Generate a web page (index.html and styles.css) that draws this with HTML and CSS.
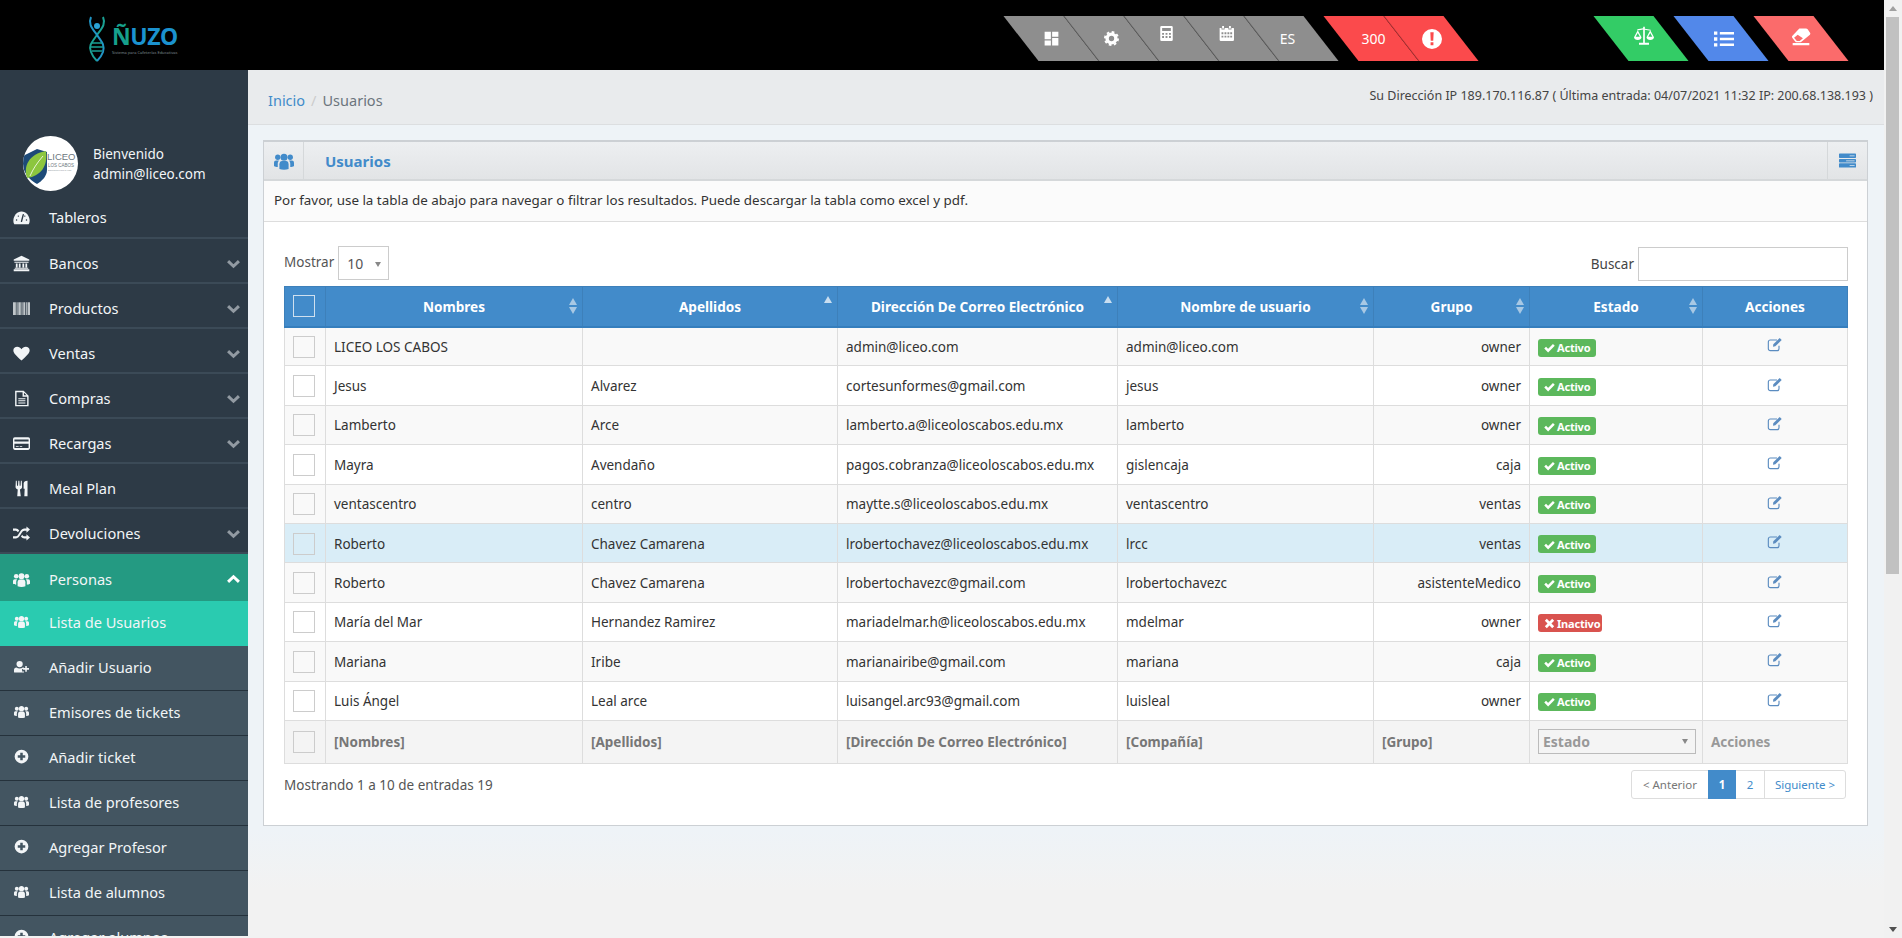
FILE: index.html
```html
<!DOCTYPE html>
<html lang="es">
<head>
    <meta charset="UTF-8">
    <title>Usuarios</title>
    <link rel="stylesheet" href="styles.css">
</head>
<body>
    <!-- icon sprite -->
    <svg class="sprite" xmlns="http://www.w3.org/2000/svg">
        <symbol id="i-users" viewBox="0 0 24 24"><circle cx="12" cy="7.5" r="4.200"/><circle cx="4.500" cy="7.500" r="3.200"/><circle cx="19.500" cy="7.500" r="3.200"/><path d="M6.500 21.500v-5.500c0-2.600 1.500-4 3-4h5c1.500 0 3 1.400 3 4v5.500c-3 1.300-8 1.300-11 0z"/><path d="M0 18v-3.500c0-2 1-3 2.500-3H6c-.9 1-1.500 2.200-1.500 4v3.800C3 19.300 1 18.700 0 18zM24 18v-3.500c0-2-1-3-2.500-3H18c.9 1 1.500 2.200 1.500 4v3.800c1.500 0 3.500-.6 4.500-1.300z"/></symbol>
        <symbol id="i-gauge" viewBox="0 0 24 24"><path d="M.5 16.500C.5 9.600 5.600 3.500 12 3.500s11.500 6.100 11.500 13c0 1.900-.5 3.500-1.300 5H1.800C1 20 .5 18.400.5 16.500z"/><path class="cut" d="M12 17.500L14.500 8M5 15.500h.1M7.500 10h.1M16.600 10h.1M19 15.500h.1"/></symbol>
        <symbol id="i-bank" viewBox="0 0 24 24"><path d="M12 1L1 6.500V8h22V6.500zM2 9.500h20v1.500H2zM1 20h22v3H1zM2.500 18h19v1.500h-19zM4 12h2.500v5.500H4zM8.200 12h2.500v5.500H8.200zM13.300 12h2.500v5.500h-2.500zM17.500 12H20v5.500h-2.500z"/></symbol>
        <symbol id="i-barcode" viewBox="0 0 24 24"><path d="M0 3h4v18H0zM5 3h1.500v18H5zM7.500 3H11v18H7.500zM12 3h1.500v18H12zM14.500 3H17v18h-2.500zM18 3h1.500v18H18zM20.500 3H24v18h-3.500z" opacity=".75"/></symbol>
        <symbol id="i-heart" viewBox="0 0 24 24"><path d="M12 22C5 15.500.5 12 .5 7.500.5 4.400 3 2.500 6 2.500c2.500 0 4.700 1.400 6 3.500 1.300-2.100 3.500-3.500 6-3.500 3 0 5.500 1.900 5.500 5C23.500 12 19 15.500 12 22z"/></symbol>
        <symbol id="i-file" viewBox="0 0 24 24"><path fill-rule="evenodd" d="M3 1h12l7 7v15H3zM5 3v18h15V9.500h-6.500V3zM15.500 3.800v3.700h3.700zM7.500 11.500h10v1.500h-10zM7.500 14.500h10V16h-10zM7.500 17.500h10V19h-10z"/></symbol>
        <symbol id="i-card" viewBox="0 0 24 24"><path fill-rule="evenodd" d="M2.500 3h19A2.500 2.500 0 0 1 24 5.500v13a2.500 2.500 0 0 1-2.500 2.500h-19A2.500 2.500 0 0 1 0 18.500v-13A2.500 2.500 0 0 1 2.500 3zM2 6.500V9h20V6.500zM2 12.500v6h20v-6zM4 15.800h4V17H4zM9.500 15.800h3.500V17H9.500z"/></symbol>
        <symbol id="i-cutlery" viewBox="0 0 24 24"><path d="M4 1h1.300l.4 7h1.400l.4-7H9l.4 7h1.300l.4-7h1.300l.4 9c0 1.500-1.200 2.800-3 3.300L11 23H6l.7-9.700C4.800 12.800 3.600 11.500 3.600 10zM15 12.500V5c0-2.500 2-4 5.500-4v22H16l.5-10.500z"/></symbol>
        <symbol id="i-random" viewBox="0 0 24 24"><path d="M19 2l5 4.500-5 4.500V8h-3c-1.500 0-2.500 1-3.500 2.500L11 13l-2 3c-1.500 2-3 3-5 3H0v-3h4c1 0 2-.6 3-2l2-3 1.600-2.500C12 6.500 13.800 5 16 5h3zM0 5h4c2 0 3.500 1 4.800 2.800L7 10.300C6 8.800 5 8 4 8H0zM13 13.800c1 1.500 2 2.200 3 2.200h3v-3l5 4.500-5 4.500v-3h-3c-2 0-3.500-1-4.800-2.800z"/></symbol>
        <symbol id="i-down" viewBox="0 0 24 24"><path d="M2 7.500L12 17 22 7.500" fill="none" stroke="currentColor" stroke-width="5.500"/></symbol>
        <symbol id="i-up" viewBox="0 0 24 24"><path d="M2 16.500L12 7l10 9.500" fill="none" stroke="currentColor" stroke-width="5.500"/></symbol>
        <symbol id="i-userplus" viewBox="0 0 24 24"><circle cx="9" cy="8" r="5"/><path d="M0 21v-3c0-3 1.500-4.500 4-4.500 1.300 1 3 1.600 5 1.600s3.700-.6 5-1.600c.8 0 1.400.2 2 .5v2h-3v4h3v1.500H2c-1.200 0-2-.3-2-.5z"/><path d="M18 11h2.500v3.500H24V17h-3.500v3.500H18V17h-3.500v-2.500H18z"/></symbol>
        <symbol id="i-plus" viewBox="0 0 24 24"><path fill-rule="evenodd" d="M12 1a11 11 0 1 1 0 22 11 11 0 0 1 0-22zM10 6v4H6v4h4v4h4v-4h4v-4h-4V6z"/></symbol>
        <symbol id="i-quilt" viewBox="0 0 24 24"><path d="M1 13h10V1H1zM1 23h10v-8H1zM13 23h10V11H13zM13 1v8h10V1z"/></symbol>
        <symbol id="i-cog" viewBox="0 0 24 24"><circle cx="12" cy="12" r="7" fill="none" stroke="currentColor" stroke-width="5.500"/><circle cx="12" cy="12" r="10.500" fill="none" stroke="currentColor" stroke-width="3" stroke-dasharray="4.300 3.950"/></symbol>
        <symbol id="i-calc" viewBox="0 0 24 24"><path fill-rule="evenodd" d="M4 0h16a2 2 0 0 1 2 2v20a2 2 0 0 1-2 2H4a2 2 0 0 1-2-2V2a2 2 0 0 1 2-2zM5 3v5h14V3zM5 11v3h3v-3zM10.500 11v3h3v-3zM16 11v3h3v-3zM5 16v3h3v-3zM10.500 16v3h3v-3zM16 16v3h3v-3z"/></symbol>
        <symbol id="i-cal" viewBox="0 0 24 24"><path fill-rule="evenodd" d="M5 0h3v4H5zM16 0h3v4h-3zM1 3h3v2.500h5V3h6v2.500h5V3h3a1 1 0 0 1 1 1v18a2 2 0 0 1-2 2H3a2 2 0 0 1-2-2zM4 10v3h3v-3zM8.800 10v3h3v-3zM13.500 10v3h3v-3zM18 10v3h3v-3zM4 15.500v3h3v-3zM8.800 15.500v3h3v-3zM13.500 15.500v3h3v-3zM18 15.500v3h3v-3z"/></symbol>
        <symbol id="i-alert" viewBox="0 0 24 24"><path fill-rule="evenodd" d="M12 0a12 12 0 1 1 0 24 12 12 0 0 1 0-24zM10 4l.5 10h3L14 4zM10.300 16v3.500h3.400V16z"/></symbol>
        <symbol id="i-scale" viewBox="0 0 24 24"><path d="M11 1h2v2.200l7 1.300v1.300l-7-1.200V20h5v2.500H6V20h5V4.100L4 5.300V4l7-1.300z"/><path fill-rule="evenodd" d="M4.500 5L9 13.500c0 2-2 3.200-4.500 3.200S0 15.500 0 13.500zM4.500 8.500L2 13h5zM19.500 5L24 13.500c0 2-2 3.200-4.500 3.200s-4.500-1.200-4.500-3.200zM19.500 8.500L17 13h5z"/></symbol>
        <symbol id="i-list" viewBox="0 0 24 24"><path d="M0 3h4v4H0zM0 10h4v4H0zM0 17h4v4H0zM7 3.500h17v3H7zM7 10.500h17v3H7zM7 17.500h17v3H7z"/></symbol>
        <symbol id="i-eraser" viewBox="0 0 24 24"><path fill-rule="evenodd" d="M10 3h8c.8 0 1.500.3 2 1l3 4.500c.4.700.3 1.400-.3 2L12.500 18.800c-.6.500-1.200.7-2 .7H7c-.8 0-1.500-.3-2-1l-3.500-4.500c-.5-.7-.5-1.400 0-2zM8 10.500l-4.300 3.700 3.300 3.800h3.500l3.800-3.300zM2 20.500h20V23H2z"/></symbol>
        <symbol id="i-tasks" viewBox="0 0 24 24"><path fill-rule="evenodd" d="M1 2h22a1 1 0 0 1 1 1v4.500a1 1 0 0 1-1 1H1a1 1 0 0 1-1-1V3a1 1 0 0 1 1-1zM1 9.800h22a1 1 0 0 1 1 1v3a1 1 0 0 1-1 1H1a1 1 0 0 1-1-1v-3a1 1 0 0 1 1-1zM1 16h22a1 1 0 0 1 1 1v4a1 1 0 0 1-1 1H1a1 1 0 0 1-1-1v-4a1 1 0 0 1 1-1zM15 5v1h7V5zM10 12v1h12v-1zM15 18.800v1h7v-1z"/></symbol>
        <symbol id="i-edit" viewBox="0 0 24 24"><path d="M18 14.500V19a3 3 0 0 1-3 3H5a3 3 0 0 1-3-3V9a3 3 0 0 1 3-3h10" fill="none" stroke="currentColor" stroke-width="1.700"/><path d="M9.500 12.500L19 3l3 3-9.500 9.500L9 16z"/></symbol>
        <symbol id="i-check" viewBox="0 0 24 24"><path d="M2.500 12.500L9 19 21.500 6.500" fill="none" stroke="currentColor" stroke-width="5.500"/></symbol>
        <symbol id="i-times" viewBox="0 0 24 24"><path d="M4 4l16 16M20 4L4 20" fill="none" stroke="currentColor" stroke-width="6"/></symbol>
    </svg>

    <div class="page">
        <div class="app">
            <header class="topbar">
                <a class="logo">
                    <svg class="logo-dna" viewBox="0 0 18 46">
                        <path d="M15 1c3 7-1 11-6 18-5 7-9 11-6 17 1 3 3 6 6 9" fill="none" stroke="#1aa093" stroke-width="2"/>
                        <path d="M3 1C0 8 4 12 9 19c5 7 8 10 6 17-1 3-3 6-6 9" fill="none" stroke="#2094c4" stroke-width="2"/>
                        <circle cx="9" cy="10" r="3" fill="#2aa2d6"/>
                        <path d="M4 27h10M3 31h12M4 35h10" stroke="#1aa093" stroke-width="1.500"/>
                    </svg>
                    <span class="logo-text">
                        <span class="logo-name"><span class="logo-n">Ñ</span>UZO</span>
                        <span class="logo-sub">Sistema para Cafeterías Educativas</span>
                    </span>
                </a>
                <div class="tabs">
                    <ul class="tab-group grey">
                        <li><span><svg class="ico"><use href="#i-quilt"/></svg></span></li>
                        <li><span><svg class="ico"><use href="#i-cog"/></svg></span></li>
                        <li><span class="raised"><svg class="ico"><use href="#i-calc"/></svg></span></li>
                        <li><span class="raised"><svg class="ico"><use href="#i-cal"/></svg></span></li>
                        <li><span class="nudge-left">ES</span></li>
                    </ul>
                    <ul class="tab-group red">
                        <li><span class="nudge-right">300</span></li>
                        <li><span><svg class="ico big"><use href="#i-alert"/></svg></span></li>
                    </ul>
                    <ul class="tab-group green tools">
                        <li><span class="raised-sm nudge-right"><svg class="ico big"><use href="#i-scale"/></svg></span></li>
                    </ul>
                    <ul class="tab-group blue">
                        <li><span class="nudge-right"><svg class="ico big"><use href="#i-list"/></svg></span></li>
                    </ul>
                    <ul class="tab-group salmon">
                        <li><span class="raised-sm"><svg class="ico big"><use href="#i-eraser"/></svg></span></li>
                    </ul>
                </div>
            </header>

            <div class="layout">
                <aside class="sidebar">
                    <div class="profile">
                        <div class="avatar">
                            <svg viewBox="0 0 55 55">
                                <path d="M0 20l14-7 10 3v18c0 6-5 11-10 14C6 44 0 36 0 28z" fill="#1d4a78"/>
                                <path d="M4 42C0 30 6 18 23 15c2 15-5 25-19 27z" fill="#8cc63f"/>
                                <path d="M7 40c3-7 7-13 13-20" fill="none" stroke="#fff" stroke-width=".8"/>
                                <text x="24" y="24" class="avatar-big">LICEO</text>
                                <text x="25" y="31" class="avatar-small">LOS CABOS</text>
                                <text x="25" y="35" class="avatar-tiny">Educación para la vida</text>
                            </svg>
                        </div>
                        <div class="profile-text">
                            <div>Bienvenido</div>
                            <div>admin@liceo.com</div>
                        </div>
                    </div>
                    <nav>
                        <a class="nav-item"><svg class="nav-ico"><use href="#i-gauge"/></svg>Tableros</a>
                        <a class="nav-item"><svg class="nav-ico"><use href="#i-bank"/></svg>Bancos<svg class="caret"><use href="#i-down"/></svg></a>
                        <a class="nav-item"><svg class="nav-ico"><use href="#i-barcode"/></svg>Productos<svg class="caret"><use href="#i-down"/></svg></a>
                        <a class="nav-item"><svg class="nav-ico"><use href="#i-heart"/></svg>Ventas<svg class="caret"><use href="#i-down"/></svg></a>
                        <a class="nav-item"><svg class="nav-ico"><use href="#i-file"/></svg>Compras<svg class="caret"><use href="#i-down"/></svg></a>
                        <a class="nav-item"><svg class="nav-ico"><use href="#i-card"/></svg>Recargas<svg class="caret"><use href="#i-down"/></svg></a>
                        <a class="nav-item"><svg class="nav-ico"><use href="#i-cutlery"/></svg>Meal Plan</a>
                        <a class="nav-item"><svg class="nav-ico"><use href="#i-random"/></svg>Devoluciones<svg class="caret"><use href="#i-down"/></svg></a>
                        <a class="nav-item open"><svg class="nav-ico"><use href="#i-users"/></svg>Personas<svg class="caret"><use href="#i-up"/></svg></a>
                        <a class="sub-item active"><svg class="nav-ico"><use href="#i-users"/></svg>Lista de Usuarios</a>
                        <a class="sub-item"><svg class="nav-ico"><use href="#i-userplus"/></svg>Añadir Usuario</a>
                        <a class="sub-item"><svg class="nav-ico"><use href="#i-users"/></svg>Emisores de tickets</a>
                        <a class="sub-item"><svg class="nav-ico"><use href="#i-plus"/></svg>Añadir ticket</a>
                        <a class="sub-item"><svg class="nav-ico"><use href="#i-users"/></svg>Lista de profesores</a>
                        <a class="sub-item"><svg class="nav-ico"><use href="#i-plus"/></svg>Agregar Profesor</a>
                        <a class="sub-item"><svg class="nav-ico"><use href="#i-users"/></svg>Lista de alumnos</a>
                        <a class="sub-item"><svg class="nav-ico"><use href="#i-plus"/></svg>Agregar alumnos</a>
                    </nav>
                </aside>

                <main class="content">
                    <div class="breadcrumb">
                        <div class="crumbs"><a>Inicio</a><span class="slash">/</span><span>Usuarios</span></div>
                        <div class="ip-info">Su Dirección IP 189.170.116.87 ( Última entrada: 04/07/2021 11:32 IP: 200.68.138.193 )</div>
                    </div>

                    <section class="box">
                        <div class="box-header">
                            <div class="box-icon"><svg class="ico big"><use href="#i-users"/></svg></div>
                            <h2>Usuarios</h2>
                            <div class="box-tool"><svg class="ico tool"><use href="#i-tasks"/></svg></div>
                        </div>
                        <p class="box-intro">Por favor, use la tabla de abajo para navegar o filtrar los resultados. Puede descargar la tabla como excel y pdf.</p>
                        <div class="box-body">
                            <div class="table-tools">
                                <label class="length">Mostrar <span class="fake-select">10<i class="tri"></i></span></label>
                                <label class="search">Buscar <input type="text"></label>
                            </div>
                            <table class="users">
                                <colgroup>
                                    <col class="c-check"><col class="c-name"><col class="c-last"><col class="c-mail">
                                    <col class="c-user"><col class="c-group"><col class="c-state"><col class="c-act">
                                </colgroup>
                                <thead>
                                    <tr>
                                        <th><span class="check head"></span></th>
                                        <th class="sort">Nombres</th>
                                        <th class="sort asc">Apellidos</th>
                                        <th class="sort asc">Dirección De Correo Electrónico</th>
                                        <th class="sort">Nombre de usuario</th>
                                        <th class="sort">Grupo</th>
                                        <th class="sort">Estado</th>
                                        <th>Acciones</th>
                                    </tr>
                                </thead>
                                <tbody>
                                    <tr><td><span class="check"></span></td><td>LICEO LOS CABOS</td><td></td><td>admin@liceo.com</td><td>admin@liceo.com</td><td class="right">owner</td><td><span class="badge on"><svg><use href="#i-check"/></svg>Activo</span></td><td class="center"><svg class="edit"><use href="#i-edit"/></svg></td></tr>
                                    <tr><td><span class="check"></span></td><td>Jesus</td><td>Alvarez</td><td>cortesunformes@gmail.com</td><td>jesus</td><td class="right">owner</td><td><span class="badge on"><svg><use href="#i-check"/></svg>Activo</span></td><td class="center"><svg class="edit"><use href="#i-edit"/></svg></td></tr>
                                    <tr><td><span class="check"></span></td><td>Lamberto</td><td>Arce</td><td>lamberto.a@liceoloscabos.edu.mx</td><td>lamberto</td><td class="right">owner</td><td><span class="badge on"><svg><use href="#i-check"/></svg>Activo</span></td><td class="center"><svg class="edit"><use href="#i-edit"/></svg></td></tr>
                                    <tr><td><span class="check"></span></td><td>Mayra</td><td>Avendaño</td><td>pagos.cobranza@liceoloscabos.edu.mx</td><td>gislencaja</td><td class="right">caja</td><td><span class="badge on"><svg><use href="#i-check"/></svg>Activo</span></td><td class="center"><svg class="edit"><use href="#i-edit"/></svg></td></tr>
                                    <tr><td><span class="check"></span></td><td>ventascentro</td><td>centro</td><td>maytte.s@liceoloscabos.edu.mx</td><td>ventascentro</td><td class="right">ventas</td><td><span class="badge on"><svg><use href="#i-check"/></svg>Activo</span></td><td class="center"><svg class="edit"><use href="#i-edit"/></svg></td></tr>
                                    <tr class="hover"><td><span class="check"></span></td><td>Roberto</td><td>Chavez Camarena</td><td>lrobertochavez@liceoloscabos.edu.mx</td><td>lrcc</td><td class="right">ventas</td><td><span class="badge on"><svg><use href="#i-check"/></svg>Activo</span></td><td class="center"><svg class="edit"><use href="#i-edit"/></svg></td></tr>
                                    <tr><td><span class="check"></span></td><td>Roberto</td><td>Chavez Camarena</td><td>lrobertochavezc@gmail.com</td><td>lrobertochavezc</td><td class="right">asistenteMedico</td><td><span class="badge on"><svg><use href="#i-check"/></svg>Activo</span></td><td class="center"><svg class="edit"><use href="#i-edit"/></svg></td></tr>
                                    <tr><td><span class="check"></span></td><td>María del Mar</td><td>Hernandez Ramirez</td><td>mariadelmar.h@liceoloscabos.edu.mx</td><td>mdelmar</td><td class="right">owner</td><td><span class="badge off"><svg><use href="#i-times"/></svg>Inactivo</span></td><td class="center"><svg class="edit"><use href="#i-edit"/></svg></td></tr>
                                    <tr><td><span class="check"></span></td><td>Mariana</td><td>Iribe</td><td>marianairibe@gmail.com</td><td>mariana</td><td class="right">caja</td><td><span class="badge on"><svg><use href="#i-check"/></svg>Activo</span></td><td class="center"><svg class="edit"><use href="#i-edit"/></svg></td></tr>
                                    <tr><td><span class="check"></span></td><td>Luis Ángel</td><td>Leal arce</td><td>luisangel.arc93@gmail.com</td><td>luisleal</td><td class="right">owner</td><td><span class="badge on"><svg><use href="#i-check"/></svg>Activo</span></td><td class="center"><svg class="edit"><use href="#i-edit"/></svg></td></tr>
                                </tbody>
                                <tfoot>
                                    <tr>
                                        <td><span class="check"></span></td>
                                        <td>[Nombres]</td>
                                        <td>[Apellidos]</td>
                                        <td>[Dirección De Correo Electrónico]</td>
                                        <td>[Compañía]</td>
                                        <td>[Grupo]</td>
                                        <td class="foot-select"><span class="fake-select">Estado<i class="tri"></i></span></td>
                                        <td class="foot-muted">Acciones</td>
                                    </tr>
                                </tfoot>
                            </table>
                            <div class="table-bottom">
                                <div class="info">Mostrando 1 a 10 de entradas 19</div>
                                <ul class="pager">
                                    <li class="disabled">&lt; Anterior</li>
                                    <li class="current">1</li>
                                    <li class="num">2</li>
                                    <li class="next">Siguiente &gt;</li>
                                </ul>
                            </div>
                        </div>
                    </section>
                </main>
            </div>
        </div>

        <div class="scrollbar">
            <div class="scroll-btn"><i class="arrow-up"></i></div>
            <div class="scroll-thumb"></div>
            <div class="scroll-rest"></div>
            <div class="scroll-btn"><i class="arrow-down"></i></div>
        </div>
    </div>
</body>
</html>
```

FILE: styles.css
```css
/* Base */
* {
    box-sizing: border-box;
}

html, body {
    margin: 0;
    height: 938px;
    overflow: hidden;
}

body {
    font-family: "Noto Sans", "Liberation Sans", sans-serif;
    font-size: 13px;
    color: #333;
    background-color: #f2f2f2;
}

.sprite {
    display: none;
}

svg {
    fill: currentColor;
}

.ico {
    display: block;
    width: 15px;
    height: 15px;
}

.ico.big {
    width: 20px;
    height: 20px;
}

.ico.tool {
    width: 17px;
    height: 17px;
}

.page {
    display: flex;
    height: 938px;
}

.app {
    display: flex;
    flex-direction: column;
    width: 1884px;
    height: 936px;
}

/* Top bar */
.topbar {
    display: flex;
    align-items: center;
    flex: none;
    height: 70px;
    padding-right: 53.5px;
    background-color: #000;
}

.logo {
    display: flex;
    align-items: center;
    gap: 6px;
    width: 248px;
    margin-top: 8px;
    padding-left: 88px;
}

.logo-dna {
    width: 18px;
    height: 46px;
}

.logo-text {
    display: flex;
    flex-direction: column;
}

.logo-name {
    font-weight: 700;
    font-size: 23px;
    line-height: 26px;
    letter-spacing: -.3px;
    color: #1b92cf;
}

.logo-n {
    color: #16a08c;
}

.logo-sub {
    margin-top: 1px;
    font-size: 4px;
    line-height: 6px;
    white-space: nowrap;
    color: #7d8a8c;
}

.tabs {
    display: flex;
    gap: 20px;
    margin-top: 7px;
    margin-left: auto;
}

.tab-group {
    display: flex;
    margin: 0;
    padding: 0;
    list-style: none;
    color: #fff;
}

.tab-group.tools {
    margin-left: 130px;
}

.tab-group li {
    width: 60px;
    height: 45px;
    transform: skewX(37.9deg);
}

.tab-group li + li {
    border-left: 1px solid rgba(0, 0, 0, 0.28);
}

.tab-group li > span {
    display: flex;
    align-items: center;
    justify-content: center;
    height: 100%;
    font-size: 14px;
    transform: skewX(-37.9deg);
}

.tab-group li > .raised {
    padding-bottom: 10px;
    padding-right: 10px;
}

.tab-group li > .raised-sm {
    padding-bottom: 6px;
}

.tab-group li > .nudge-left {
    padding-right: 8px;
}

.tab-group li > .nudge-right {
    padding-left: 5px;
}

.grey li { background-color: #8e8e8e; }
.red li { background-color: #fb4a4c; }
.green li { background-color: #33cc66; }
.blue li { background-color: #5288ea; }
.salmon li { background-color: #fb6b6b; }

/* Sidebar */
.layout {
    display: flex;
    flex: 1;
    min-height: 0;
}

.sidebar {
    flex: none;
    width: 248px;
    overflow: hidden;
    background-color: #2d3a46;
    color: #f2f5f7;
}

.profile {
    display: flex;
    align-items: center;
    gap: 15px;
    height: 124px;
    padding: 66px 0 3px 23px;
    font-size: 13.500px;
    line-height: 20px;
}

.avatar {
    flex: none;
    width: 55px;
    height: 55px;
    overflow: hidden;
    border-radius: 50%;
    background-color: #fff;
}

.avatar svg {
    display: block;
    width: 55px;
    height: 55px;
}

.avatar-big {
    font-family: "Liberation Sans", sans-serif;
    font-size: 9.500px;
    fill: #6d7780;
}

.avatar-small {
    font-family: "Liberation Sans", sans-serif;
    font-size: 4.500px;
    fill: #6d7780;
}

.avatar-tiny {
    font-family: "Liberation Sans", sans-serif;
    font-size: 2.300px;
    fill: #8a9299;
}

.nav-item,
.sub-item {
    display: flex;
    align-items: center;
    height: 45px;
    font-size: 14.600px;
}

.nav-item {
    padding-top: 5px;
    border-bottom: 2px solid #3b4a57;
}

.nav-item:first-child {
    padding-top: 3px;
}

.nav-ico {
    flex: none;
    width: 17px;
    height: 17px;
    margin: 0 19.500px 0 12.500px;
}

.sub-item .nav-ico {
    width: 15px;
    height: 15px;
    margin: 0 20.500px 0 13.500px;
}

.caret {
    width: 13px;
    height: 13px;
    margin-left: auto;
    margin-right: 8.500px;
    color: #929aa2;
}

.nav-item.open {
    height: 47px;
    padding-top: 3px;
    border-bottom: 0;
    background-color: #249a82;
}

.nav-item.open .caret {
    color: #fff;
}

.sub-item {
    padding-bottom: 3px;
    border-bottom: 1px solid #25323c;
    background-color: #435561;
}

.sub-item.active {
    padding-bottom: 4px;
    border-bottom: 0;
    background-color: #2acbb0;
}

.cut {
    fill: none;
    stroke: #2d3a46;
    stroke-width: 2;
    stroke-linecap: round;
}

/* Content */
.content {
    flex: 1;
    min-width: 0;
    background: linear-gradient(#eef3f7 0, #eef3f7 760px, #f2f2f2 820px);
}

.breadcrumb {
    display: flex;
    justify-content: space-between;
    height: 55px;
    padding: 0 11px 0 20px;
    border-bottom: 1px solid #dcdee0;
    background-color: #e9ebed;
}

.crumbs {
    display: flex;
    align-items: center;
    gap: 6px;
    padding-top: 6px;
    font-size: 14.500px;
    color: #6c757d;
}

.crumbs a {
    color: #428bca;
}

.slash {
    color: #ccc;
}

.ip-info {
    padding-top: 17px;
    font-size: 12.500px;
    line-height: 18px;
    color: #444;
}

.box {
    margin: 15px 16px 0 15px;
    border: 1px solid #ccd0d4;
    background-color: #fff;
}

.box-header {
    display: flex;
    align-items: center;
    height: 40px;
    border-top: 1px solid #ccd0d4;
    border-bottom: 2px solid #d5d8da;
    background: linear-gradient(#edeff1, #e2e4e6);
    color: #428bca;
}

.box-icon,
.box-tool {
    display: flex;
    align-items: center;
    justify-content: center;
    width: 40px;
    height: 100%;
    border-right: 1px solid #d5d8da;
}

.box-tool {
    border-right: 0;
    border-left: 1px solid #d5d8da;
}

.box-header h2 {
    flex: 1;
    margin: 0 0 0 21px;
    font-size: 15px;
    font-weight: 700;
}

.box-intro {
    height: 41px;
    margin: 0;
    padding-left: 10px;
    border-bottom: 1px solid #ddd;
    font-size: 13.400px;
    line-height: 39px;
    background-color: #fbfbfb;
}

.box-body {
    height: 603px;
    padding: 24px 19px 0 20px;
}

.table-tools {
    display: flex;
    justify-content: space-between;
    height: 40px;
}

.length,
.search {
    display: flex;
    gap: 4px;
    font-size: 13.500px;
    color: #555;
}

.length {
    align-items: flex-start;
    line-height: 32px;
}

.search {
    align-items: flex-start;
    line-height: 36px;
    color: #444;
}

.search input {
    width: 210px;
    height: 34px;
    margin-top: 1px;
    border: 1px solid #ccc;
    background-color: #fff;
}

.fake-select {
    display: flex;
    align-items: center;
    justify-content: space-between;
    width: 51px;
    height: 34px;
    padding: 2px 7px 0 8px;
    border: 1px solid #ccc;
    font-size: 14px;
    color: #555;
    background-color: #fff;
}

.tri {
    width: 0;
    height: 0;
    border: 3.500px solid transparent;
    border-top: 5px solid #888;
    border-bottom: 0;
}

/* Table */
.users {
    width: 1563px;
    border-collapse: collapse;
    table-layout: fixed;
    font-size: 13.500px;
}

.c-check { width: 41px; }
.c-name { width: 257px; }
.c-last { width: 255px; }
.c-mail { width: 280px; }
.c-user { width: 256px; }
.c-group { width: 156px; }
.c-state { width: 173px; }
.c-act { width: 145px; }

.users th,
.users td {
    border: 1px solid #ddd;
    padding: 0 8px;
    white-space: nowrap;
    overflow: hidden;
}

.users td {
    padding-top: 1px;
}

.users th {
    position: relative;
    height: 40px;
    border-color: #3d80ba;
    border-bottom: 2px solid #357ebd;
    background-color: #428bca;
    color: #fff;
    font-size: 13.600px;
    font-weight: 700;
    text-align: center;
}

.users tbody tr {
    height: 39.400px;
    background-color: #fff;
}

.users tbody tr:nth-child(odd) {
    background-color: #f9f9f9;
}

.users tbody tr.hover {
    background-color: #d9edf7;
}

.users tfoot tr {
    height: 43px;
    background-color: #f4f4f4;
    color: #777;
    font-weight: 700;
}

.users .foot-muted {
    color: #999;
}

.users .foot-select {
    padding: 0 8px;
}

.foot-select .fake-select {
    width: 158px;
    height: 25px;
    padding: 0 7px 0 4px;
    border-color: #bbb;
    color: #999;
    background-color: #f4f4f4;
}

/* sort arrows sit over the header cell */
.sort::before,
.sort::after {
    content: "";
    position: absolute;
    right: 5px;
    border: 4px solid transparent;
}

.sort::before {
    top: 11px;
    border-top: 0;
    border-bottom: 7px solid #a8c8e4;
}

.sort::after {
    top: 20px;
    border-bottom: 0;
    border-top: 7px solid #a8c8e4;
}

.sort.asc::before {
    top: 9px;
    border-bottom-color: #c9def0;
}

.sort.asc::after {
    display: none;
}

.check {
    display: block;
    width: 22px;
    height: 22px;
    border: 1px solid #ccc;
    background-color: inherit;
}

.check.head {
    border-color: #cfe0ef;
}

.right {
    text-align: right;
}

.center {
    text-align: center;
}

.badge {
    display: inline-flex;
    align-items: center;
    gap: 2px;
    height: 18px;
    padding: 0 6px;
    border-radius: 3px;
    color: #fff;
    font-size: 11px;
    font-weight: 700;
    letter-spacing: -.2px;
    vertical-align: middle;
}

.badge svg {
    flex: none;
    width: 11px;
    height: 11px;
}

.badge.on {
    width: 58px;
    background-color: #5cb85c;
}

.badge.off {
    width: 64px;
    background-color: #d9534f;
}

.edit {
    display: inline-block;
    width: 16px;
    height: 16px;
    margin-bottom: 5px;
    color: #5b8cc0;
    vertical-align: middle;
}

.table-bottom {
    display: flex;
    justify-content: space-between;
    padding: 6px 2px 0 0;
}

.info {
    padding-top: 5px;
    font-size: 13.500px;
    line-height: 20px;
    color: #555;
}

.pager {
    display: flex;
    height: 29px;
    margin: 0;
    padding: 0;
    border: 1px solid #ddd;
    border-radius: 3px;
    list-style: none;
    font-size: 11.500px;
    line-height: 27px;
    text-align: center;
    color: #428bca;
}

.pager li {
    border-left: 1px solid #ddd;
    white-space: nowrap;
}

.pager .disabled {
    width: 76px;
    border-left: 0;
    color: #777;
}

.pager .current {
    width: 28px;
    margin: -1px 0;
    border: 0;
    line-height: 29px;
    color: #fff;
    font-weight: 700;
    background-color: #428bca;
}

.pager .num {
    width: 28px;
    border-left: 0;
}

.pager .next {
    width: 81px;
}

/* Window scrollbar as it appears in the shot */
.scrollbar {
    display: flex;
    flex-direction: column;
    flex: none;
    width: 18px;
    padding-left: 2px;
    background-color: #f1f1f1;
}

.scroll-btn {
    display: flex;
    align-items: center;
    justify-content: center;
    flex: none;
    width: 13px;
    height: 17px;
}

.arrow-up,
.arrow-down {
    border: 4px solid transparent;
}

.arrow-up {
    border-top: 0;
    border-bottom: 5px solid #a0a0a0;
}

.arrow-down {
    border-bottom: 0;
    border-top: 5px solid #505050;
}

.scroll-thumb {
    flex: none;
    width: 13px;
    height: 557px;
    background-color: #c1c1c1;
}

.scroll-rest {
    flex: 1;
}
```
